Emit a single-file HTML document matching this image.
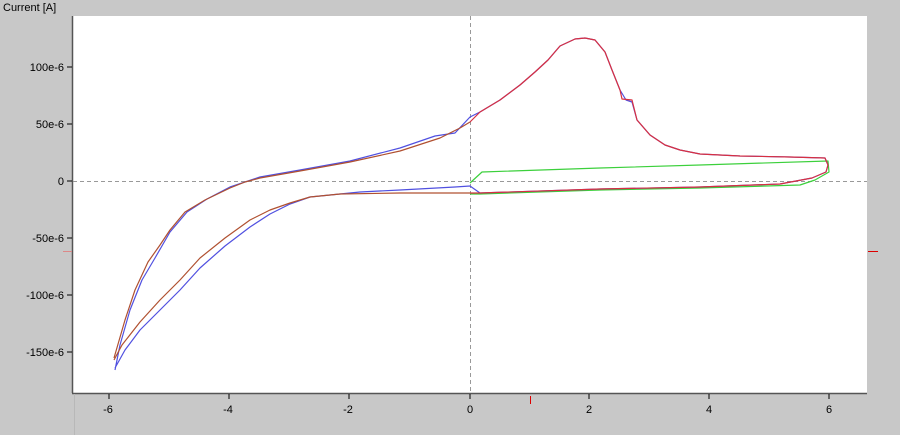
<!DOCTYPE html>
<html><head><style>
body{margin:0;width:900px;height:435px;background:#c8c8c8;overflow:hidden;font-family:"Liberation Sans",sans-serif}
</style></head><body>
<svg width="900" height="435" xmlns="http://www.w3.org/2000/svg" style="position:absolute;left:0;top:0">
<rect x="0" y="0" width="900" height="435" fill="#c8c8c8"/>
<rect x="73" y="16" width="794" height="377" fill="#fff"/>
<line x1="72.5" y1="16" x2="72.5" y2="393" stroke="#555" stroke-width="1.5"/>
<line x1="72" y1="393.5" x2="867" y2="393.5" stroke="#555" stroke-width="1.5"/>
<line x1="74.5" y1="394" x2="74.5" y2="435" stroke="#b8b8b8"/>
<line x1="73" y1="181.5" x2="867" y2="181.5" stroke="#999" stroke-dasharray="4,3"/>
<line x1="470.5" y1="16" x2="470.5" y2="393" stroke="#999" stroke-dasharray="4,3"/>
<g font-size="11" fill="#000" text-anchor="end">
<text x="3" y="11" text-anchor="start">Current [A]</text>
<text x="64" y="71">100e-6</text>
<text x="64" y="128">50e-6</text>
<text x="64" y="185">0</text>
<text x="64" y="242">-50e-6</text>
<text x="64" y="299">-100e-6</text>
<text x="64" y="356">-150e-6</text>
</g>
<g stroke="#000"><line x1="67" y1="67" x2="72" y2="67"/><line x1="67" y1="124" x2="72" y2="124"/><line x1="67" y1="181" x2="72" y2="181"/><line x1="67" y1="238" x2="72" y2="238"/><line x1="67" y1="295" x2="72" y2="295"/><line x1="67" y1="352" x2="72" y2="352"/>
<line x1="109" y1="394" x2="109" y2="399"/><line x1="229" y1="394" x2="229" y2="399"/><line x1="349" y1="394" x2="349" y2="399"/><line x1="470" y1="394" x2="470" y2="399"/><line x1="589" y1="394" x2="589" y2="399"/><line x1="709" y1="394" x2="709" y2="399"/><line x1="829" y1="394" x2="829" y2="399"/></g>
<g font-size="11" text-anchor="middle"><text x="108" y="413">-6</text><text x="228" y="413">-4</text><text x="348" y="413">-2</text><text x="470" y="413">0</text><text x="589" y="413">2</text><text x="709" y="413">4</text><text x="829" y="413">6</text></g>
<line x1="530.5" y1="396" x2="530.5" y2="404" stroke="#d00"/>
<line x1="868" y1="251.5" x2="878" y2="251.5" stroke="#d00"/>
<line x1="63" y1="251.5" x2="72" y2="251.5" stroke="#d88"/>
<g fill="none" stroke-width="1.2" stroke-linejoin="round">
<polyline stroke="#3cd03c" points="470,183 482,172 600,168 700,165 828,161 829,172 815,180 800,185 700,188 600,190 480,194 470,194"/>
<polyline stroke="#5050e0" points="115,370 120,345 130,310 142,280 155,258 170,232 187,212 207,199 230,187 260,177 300,170 350,161 400,148 435,136 455,133 470,117 480,112 500,100 520,85 535,72 548,60 560,46 575,39 585,38 595,40 605,52 612,70 620,90 626,100 632,102 637,120 650,135 665,145 680,150 700,154 740,156 790,157 825,158 828,165 826,172 812,178 780,184 700,187 600,189 480,193 470,186 455,187 400,190 360,192 340,194 310,197 290,204 270,214 250,227 225,246 200,268 180,290 160,310 140,330 125,350 115,368"/>
<polyline stroke="#b05030" points="114,358 125,320 135,290 148,262 160,245 170,230 185,212 205,200 230,188 245,182 260,178 300,171 350,162 400,151 440,138 460,128 470,122"/>
<polyline stroke="#b05030" points="470,193 400,193 340,194 310,197 290,203 270,210 250,220 225,238 200,258 180,280 160,300 140,322 122,345 114,360"/>
<polyline stroke="#d83040" points="470,122 480,112 500,100 520,85 535,72 548,60 560,46 575,39 585,38 595,40 605,52 612,70 620,90 622,99 632,100 637,120 650,135 665,145 680,150 700,154 740,156 790,157 825,158 828,165 826,172 812,178 780,184 700,187 600,189 480,193 470,193"/>
</g>
</svg>
</body></html>
